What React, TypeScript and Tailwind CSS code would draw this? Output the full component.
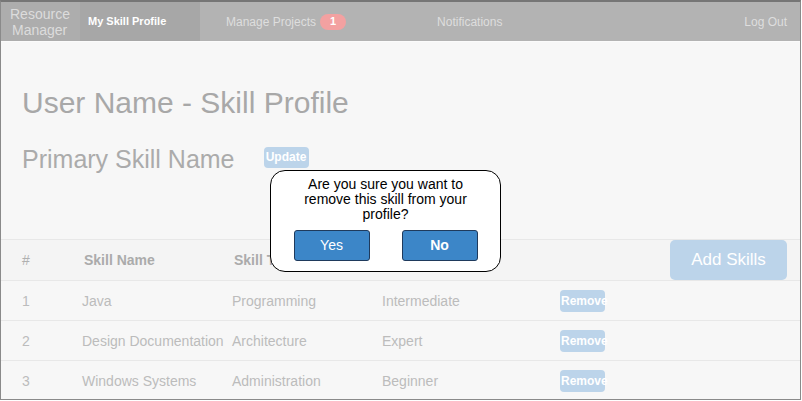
import { Fragment } from "react"

const skills = [
  { id: 1, name: "Java", type: "Programming", level: "Intermediate" },
  { id: 2, name: "Design Documentation", type: "Architecture", level: "Expert" },
  { id: 3, name: "Windows Systems", type: "Administration", level: "Beginner" },
]

function NavBar() {
  return (
    <div className="flex h-[40px] items-stretch border-b border-[#fbfbfb] bg-[#b3b3b3] text-[12px]">
      <div className="flex w-[79px] flex-col justify-center bg-[#adadad] pl-[9px] text-[14px] leading-[16px] text-[#dcdcdc]">
        <span>Resource</span>
        <span className="pl-[2px]">Manager</span>
      </div>
      <div className="flex w-[120px] items-center bg-[#a7a7a7] pl-[8px] text-[11px] font-bold text-white">
        My Skill Profile
      </div>
      <div className="flex items-center pl-[26px] text-[#dedede]">
        Manage Projects
        <span className="ml-[4px] flex h-[16px] w-[26px] items-center justify-center rounded-full bg-[#f3a1a1] text-[11px] font-bold text-white">
          1
        </span>
      </div>
      <div className="flex items-center pl-[91px] text-[#dedede]">Notifications</div>
      <div className="ml-auto flex items-center pr-[13px] text-[#dedede]">Log Out</div>
    </div>
  )
}

function ConfirmDialog() {
  return (
    <div className="absolute left-[269px] top-[168px] w-[231px] rounded-[15px] border border-black bg-white pb-[10px] pt-[6px] text-center">
      <p className="text-[14px] leading-[15px] text-black">
        Are you sure you want to
        <br />
        remove this skill from your
        <br />
        profile?
      </p>
      <div className="mt-[8px] flex justify-center gap-[32px]">
        <button className="h-[31px] w-[76px] rounded-[3px] border border-[#1f3a5c] bg-[#3c86c8] text-[14px] text-white">
          Yes
        </button>
        <button className="h-[31px] w-[76px] rounded-[3px] border border-[#1f3a5c] bg-[#3c86c8] text-[14px] font-bold text-white">
          No
        </button>
      </div>
    </div>
  )
}

export default function App() {
  return (
    <div className="relative h-[400px] w-[801px] overflow-hidden border border-t-2 border-[#8a8a8a] border-t-[#767676] bg-[#f7f7f7] font-['Liberation_Sans',Arial,sans-serif]">
      <NavBar />

      <div className="pl-[21px]">
        <h1 className="mt-[44px] text-[30px] leading-[34px] text-[#a8a8a8]">User Name - Skill Profile</h1>
        <div className="mt-[25px] flex items-center">
          <h2 className="text-[25px] leading-[28px] text-[#ababab]">Primary Skill Name</h2>
          <button className="mb-[4px] ml-[29px] h-[21px] w-[45px] rounded-[4px] bg-[#bcd4ea] text-[12px] font-bold text-white">
            Update
          </button>
        </div>
      </div>

      <div className="mt-[66px] grid grid-cols-[81px_150px_150px_178px_1fr] border-t border-[#e8e8e8] text-[14px]">
        <div className="flex h-[40px] items-center bg-[#f4f4f4] pl-[21px] text-[#b0b0b0]">#</div>
        <div className="flex h-[40px] items-center bg-[#f4f4f4] pl-[2px] font-bold text-[#ababab]">Skill Name</div>
        <div className="flex h-[40px] items-center bg-[#f4f4f4] pl-[2px] font-bold text-[#ababab]">Skill Type</div>
        <div className="flex h-[40px] items-center bg-[#f4f4f4] font-bold text-[#ababab]">Level</div>
        <div className="flex h-[40px] items-stretch justify-end bg-[#f4f4f4] pr-[13px]">
          <button className="w-[117px] rounded-[5px] bg-[#bcd4ea] text-[17px] text-white">Add Skills</button>
        </div>

        {skills.map((s) => (
          <Fragment key={s.id}>
            <div className="flex h-[40px] items-center border-t border-[#e8e8e8] pl-[21px] pt-[1px] text-[#bcbcbc]">{s.id}</div>
            <div className="flex h-[40px] items-center border-t border-[#e8e8e8] pt-[1px] text-[#bcbcbc]">{s.name}</div>
            <div className="flex h-[40px] items-center border-t border-[#e8e8e8] pt-[1px] text-[#bcbcbc]">{s.type}</div>
            <div className="flex h-[40px] items-center border-t border-[#e8e8e8] pt-[1px] text-[#bcbcbc]">{s.level}</div>
            <div className="flex h-[40px] items-center border-t border-[#e8e8e8]">
              <button className="flex h-[22px] w-[45px] items-center overflow-visible whitespace-nowrap rounded-[4px] bg-[#bcd4ea] pl-[1px] text-[12px] font-bold text-white">
                Remove
              </button>
            </div>
          </Fragment>
        ))}
      </div>

      <ConfirmDialog />
    </div>
  )
}
